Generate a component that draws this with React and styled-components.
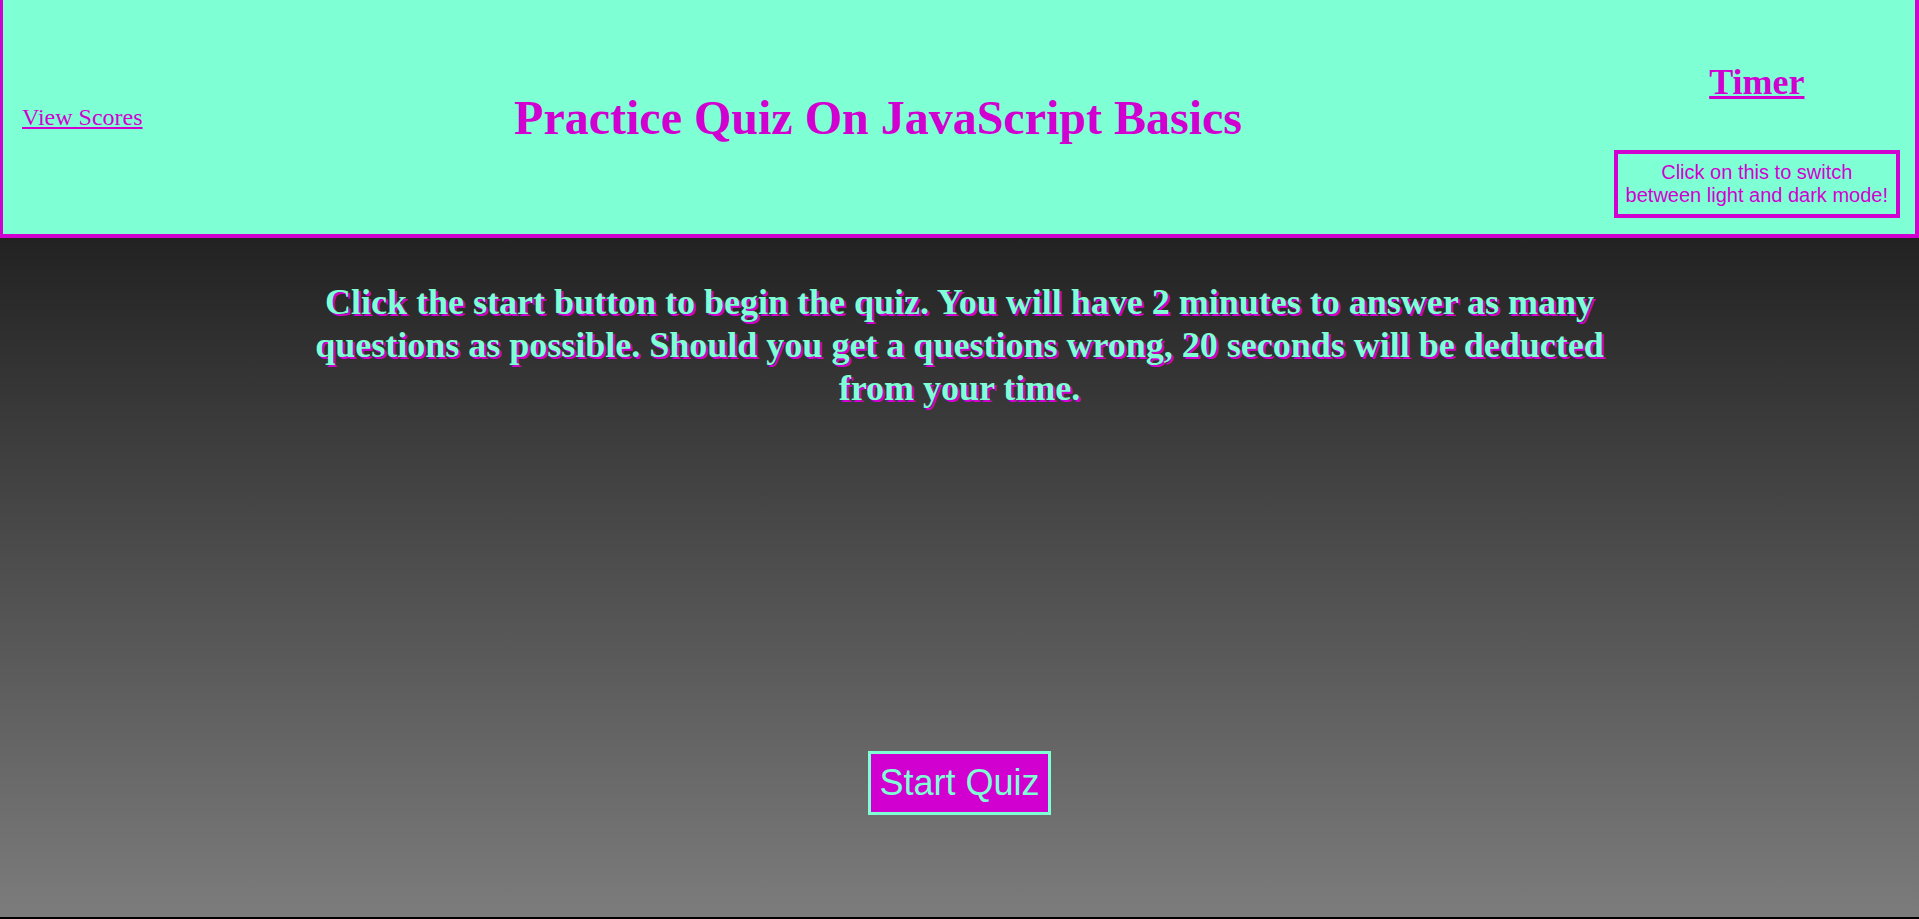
import React from 'react';
import styled, { createGlobalStyle } from 'styled-components';

const magenta = '#d100d1';
const aqua = '#7fffd4';

const GlobalStyle = createGlobalStyle`
  html {
    background: #000;
  }
  body {
    margin: 0;
    font-family: "Liberation Serif", "Times New Roman", serif;
  }
`

const Page = styled.div`
  display: flex;
  flex-direction: column;
  height: 917px;
`

const Header = styled.header`
  box-sizing: border-box;
  height: 238px;
  display: flex;
  align-items: center;
  justify-content: space-between;
  padding: 0 15px 0 19px;
  background-color: ${aqua};
  border: 3px solid ${magenta};
  border-top: none;
  border-bottom-width: 4px;
  border-right-width: 4px;
`

const ScoresLink = styled.a`
  font-size: 24px;
  color: ${magenta};
  text-decoration: underline;
  cursor: pointer;
`

const Title = styled.h1`
  margin: 0;
  font-size: 48px;
  font-weight: bold;
  color: ${magenta};
`

const TimerColumn = styled.div`
  align-self: stretch;
  display: flex;
  flex-direction: column;
  align-items: center;
  justify-content: space-between;
  padding: 61px 0 16px;
`

const Timer = styled.h2`
  margin: 0;
  font-size: 36px;
  font-weight: bold;
  color: ${magenta};
  text-decoration: underline;
`

const ModeButton = styled.button`
  background: transparent;
  border: 4px solid ${magenta};
  color: ${magenta};
  font-family: "Liberation Sans", Arial, sans-serif;
  font-size: 20px;
  line-height: normal;
  padding: 7px 8px;
  text-align: center;
  cursor: pointer;
`

const Main = styled.main`
  flex: 1;
  display: flex;
  flex-direction: column;
  align-items: center;
  padding-top: 43px;
  background: linear-gradient(#222222, #7c7c7c);
`

const Instructions = styled.p`
  width: 70%;
  margin: 0;
  text-align: center;
  font-size: 36px;
  line-height: 43px;
  font-weight: bold;
  color: ${aqua};
  text-shadow: 2px 2px ${magenta};
`

const StartButton = styled.button`
  margin-top: 341px;
  background-color: ${magenta};
  border: 3px solid ${aqua};
  color: ${aqua};
  font-family: "Liberation Sans", Arial, sans-serif;
  font-size: 36px;
  line-height: normal;
  padding: 8px 8px;
  cursor: pointer;
`

const App = () => {
  return (
    <>
      <GlobalStyle />
      <Page>
        <Header>
          <ScoresLink>View Scores</ScoresLink>
          <Title>Practice Quiz On JavaScript Basics</Title>
          <TimerColumn>
            <Timer>Timer</Timer>
            <ModeButton>
              Click on this to switch<br />between light and dark mode!
            </ModeButton>
          </TimerColumn>
        </Header>
        <Main>
          <Instructions>
            Click the start button to begin the quiz. You will have 2 minutes to answer as many
            questions as possible. Should you get a questions wrong, 20 seconds will be deducted
            from your time.
          </Instructions>
          <StartButton>Start Quiz</StartButton>
        </Main>
      </Page>
    </>
  )
}

export default App;
